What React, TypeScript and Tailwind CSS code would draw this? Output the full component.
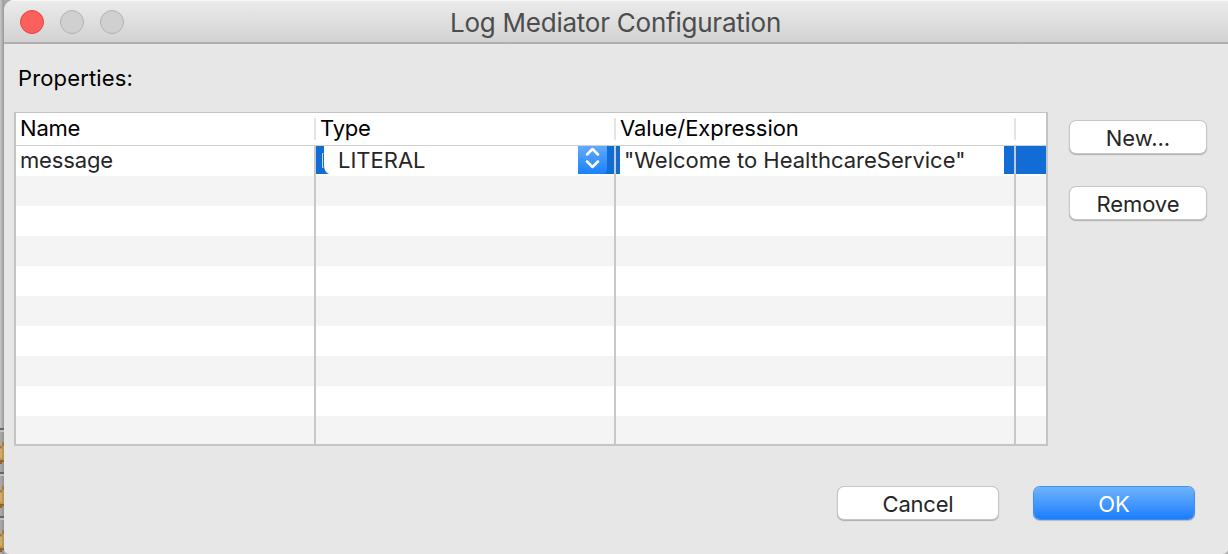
import React from "react";

const stripes = [0, 1, 2, 3, 4, 5, 6, 7, 8];

function Columns({ children, className }: { children: React.ReactNode; className: string }) {
  return <div className={`grid grid-cols-[298px_300px_400px_32px] ${className}`}>{children}</div>;
}

function Button({ label, className }: { label: string; className: string }) {
  return (
    <button
      className={`flex h-[32px] items-center justify-center rounded-[6px] pt-[2px] text-[22px] leading-[28px] ${className}`}
    >
      {label}
    </button>
  );
}

const plain = "bg-white text-[#262626] shadow-[0_0_0_1px_#c6c6c6,0_1px_1px_1px_#adadad]";

function BackgroundRow() {
  return (
    <svg className="block shrink-0" width="4" height="44" viewBox="0 0 4 44" shapeRendering="crispEdges">
      <rect width="4" height="44" fill="#a8a7a5" />
      <rect x="2" width="2" height="44" fill="#999896" />
      <rect width="4" height="2" fill="#666" />
      <rect y="2" width="4" height="2" fill="#c2c2c2" />
      <path d="M2 14h2v4h-2v2h-2v-2h2z" fill="#a57a40" />
      <path d="M0 20h2v-2h2v14H0z" fill="#bd9552" />
      <path d="M0 21h2v9H0z" fill="#c9ad70" />
      <path d="M0 32h4v2H2v2H0z" fill="#95622a" />
    </svg>
  );
}

export default function App() {
  return (
    <div className="flex h-[554px] w-[1228px] overflow-hidden bg-[#aaa] font-['Inter','Liberation_Sans',sans-serif]">
      <div className="flex w-[4px] shrink-0 flex-col bg-gradient-to-r from-[#c8c8c8] to-[#989898]">
        <div className="h-[428px] shrink-0" />
        <BackgroundRow />
        <BackgroundRow />
        <BackgroundRow />
      </div>
      <main className="flex w-[1224px] flex-col overflow-hidden rounded-tl-[10px] rounded-b-[5px] bg-[#e7e7e7]">
        <header className="flex h-[44px] shrink-0 items-center border-b-2 border-[#b0b0b0] bg-gradient-to-b from-[#ececec] to-[#d2d2d2] pl-[16px] shadow-[inset_0_1px_0_#f8f8f8]">
          <div className="flex w-[104px] gap-[16px] pt-[2px]">
            <span className="h-6 w-6 rounded-full border border-[#e14640] bg-[#fc605c]" />
            <span className="h-6 w-6 rounded-full border border-[#b1b1b1] bg-[#d0d0d0]" />
            <span className="h-6 w-6 rounded-full border border-[#b1b1b1] bg-[#d0d0d0]" />
          </div>
          <h1 className="ml-[326px] whitespace-nowrap pt-[4px] text-[26px] leading-[32px] tracking-[-0.24px] text-[#4d4d4d]">
            Log Mediator Configuration
          </h1>
        </header>
        <div className="flex h-[68px] shrink-0 items-start pl-[14px] pt-[20px] text-[22px] leading-[28px] tracking-[0.15px] text-black">
          Properties:
        </div>
        <div className="flex shrink-0 pl-[10px]">
          <section className="h-[334px] w-[1034px] border-2 border-t border-[#c4c4c4] bg-white text-[22px] leading-[28px] text-black">
            <Columns className="h-[33px] border-b border-[#d0d0d0]">
              <div className="pl-[4px] pt-[1px] tracking-[-0.2px]">Name</div>
              <div className="flex">
                <span className="mt-[5px] h-[22px] w-[2px] bg-[#e4e4e4]" />
                <span className="pl-[4px] pt-[1px] tracking-[-0.2px]">Type</span>
              </div>
              <div className="flex">
                <span className="mt-[5px] h-[22px] w-[2px] bg-[#e4e4e4]" />
                <span className="pl-[4px] pt-[1px] tracking-[-0.06px]">Value/Expression</span>
              </div>
              <div className="pt-[5px]">
                <div className="h-[22px] w-[2px] bg-[#e4e4e4]" />
              </div>
            </Columns>
            <Columns className="h-[30px] text-[#262626]">
              <div className="pl-[4px] tracking-[-0.15px]">message</div>
              <div className="flex border-l-2 border-[#c8c8c8]">
                <div className="flex h-[28px] w-[298px] bg-[#116cd6] pl-[6px]">
                  <svg className="shrink-0" width="8" height="28" viewBox="0 0 8 28">
                    <path d="M2 0h6v28H7Q2 26 2 19z" fill="white" />
                    <path d="M1.5 7.5h-1v14h1" fill="none" stroke="#c9dcf3" />
                  </svg>
                  <div className="w-[248px] bg-white pl-[8px]">LITERAL</div>
                  <svg width="29" height="28" viewBox="0 0 29 28">
                    <defs>
                      <linearGradient id="stepper" x1="0" y1="0" x2="0" y2="1">
                        <stop stopColor="#62aafa" />
                        <stop offset="1" stopColor="#1980ff" />
                      </linearGradient>
                    </defs>
                    <path d="M0 0h29v23q0 5-5 5H0z" fill="url(#stepper)" />
                    <path
                      d="M9 8.5l5.5-5.5 5.5 5.5M9 15.5l5.5 5.5 5.5-5.5"
                      fill="none"
                      stroke="white"
                      strokeWidth="2.5"
                      strokeLinecap="round"
                      strokeLinejoin="round"
                    />
                  </svg>
                </div>
              </div>
              <div className="flex border-l-2 border-[#c8c8c8]">
                <div className="flex h-[28px] w-[398px] bg-[#116cd6] pl-[4px]">
                  <div className="w-[384px] whitespace-nowrap bg-white pl-[4px]">"Welcome to HealthcareService"</div>
                </div>
              </div>
              <div className="border-l-2 border-[#c8c8c8]">
                <div className="h-[28px] bg-[#116cd6]" />
              </div>
            </Columns>
            {stripes.map((index) => (
              <Columns
                key={index}
                className={`${index === 8 ? "h-[28px]" : "h-[30px]"} ${index % 2 === 0 ? "bg-[#f4f4f4]" : "bg-white"}`}
              >
                <div />
                <div className="border-l-2 border-[#c8c8c8]" />
                <div className="border-l-2 border-[#c8c8c8]" />
                <div className="border-l-2 border-[#c8c8c8]" />
              </Columns>
            ))}
          </section>
          <div className="ml-[22px] flex flex-col gap-[34px] pt-[9px]">
            <Button label="New..." className={`w-[136px] ${plain}`} />
            <Button label="Remove" className={`w-[136px] tracking-[-0.1px] ${plain}`} />
          </div>
        </div>
        <footer className="flex gap-[36px] pl-[834px] pt-[41px]">
          <Button label="Cancel" className={`w-[160px] tracking-[-0.2px] ${plain}`} />
          <Button
            label="OK"
            className="w-[160px] bg-gradient-to-b from-[#6db3f9] to-[#167cff] text-white shadow-[0_0_0_1px_#3c91f2,0_1px_1px_1px_#b8b8c0]"
          />
        </footer>
      </main>
    </div>
  );
}
